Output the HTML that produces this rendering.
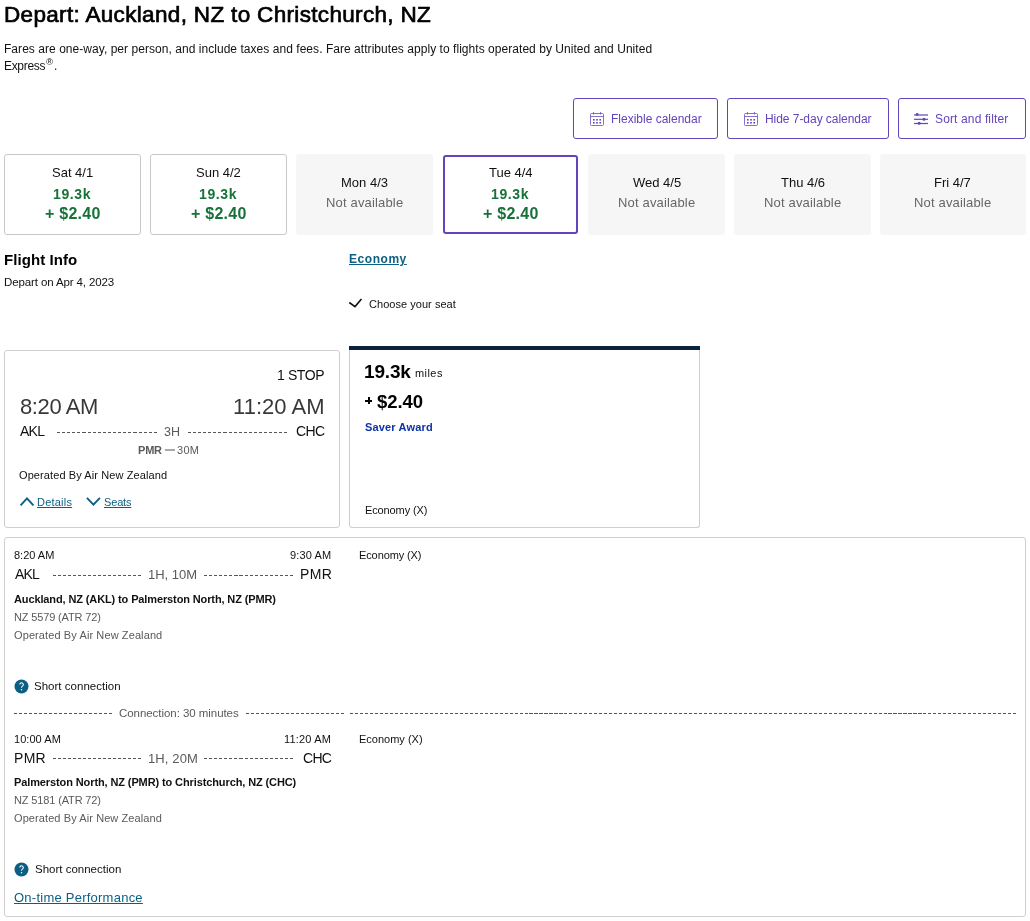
<!DOCTYPE html>
<html><head><meta charset="utf-8"><style>
html,body{margin:0;padding:0;background:#fff;}
body{width:1030px;height:921px;position:relative;overflow:hidden;font-family:"Liberation Sans",sans-serif;}
.t{position:absolute;white-space:nowrap;will-change:transform;}
.dash{position:absolute;height:1px;}
.btn{position:absolute;top:98px;height:41px;box-sizing:border-box;border:1px solid #6244bb;border-radius:3px;background:#fff;}
.ic{position:absolute;}
.card{position:absolute;top:154px;height:81px;box-sizing:border-box;border-radius:3px;}
.card.av{border:1px solid #c8c8c8;background:#fff;}
.card.na{background:#f6f6f6;}
.card.sel{border:2px solid #6244bb;background:#fff;top:155px;height:79px;}
.box{position:absolute;box-sizing:border-box;border:1px solid #cfcfcf;border-radius:3px;background:#fff;}
.box.fare{border-top:none;border-radius:0 0 3px 3px;}
.bar{position:absolute;left:349px;top:346px;width:351px;height:4px;background:#0c2340;}
</style></head><body>
<div class="btn" style="left:573px;width:145px;"></div>
<div class="btn" style="left:727px;width:161.5px;"></div>
<div class="btn" style="left:898px;width:128px;"></div>
<svg class="ic" style="left:589px;top:111px" width="16" height="16" viewBox="0 0 16 16"><g fill="none" stroke="#6244bb" stroke-width="0.9" opacity="0.85"><rect x="1.5" y="2.5" width="13" height="12" rx="1"/><line x1="1.5" y1="5.5" x2="14.5" y2="5.5"/><line x1="4.5" y1="1" x2="4.5" y2="3.5"/><line x1="11.5" y1="1" x2="11.5" y2="3.5"/></g><g fill="#6244bb"><rect x="4" y="8" width="1.6" height="1.6"/><rect x="7.2" y="8" width="1.6" height="1.6"/><rect x="10.4" y="8" width="1.6" height="1.6"/><rect x="4" y="11" width="1.6" height="1.6"/><rect x="7.2" y="11" width="1.6" height="1.6"/><rect x="10.4" y="11" width="1.6" height="1.6"/></g></svg>
<svg class="ic" style="left:743px;top:111px" width="16" height="16" viewBox="0 0 16 16"><g fill="none" stroke="#6244bb" stroke-width="0.9" opacity="0.85"><rect x="1.5" y="2.5" width="13" height="12" rx="1"/><line x1="1.5" y1="5.5" x2="14.5" y2="5.5"/><line x1="4.5" y1="1" x2="4.5" y2="3.5"/><line x1="11.5" y1="1" x2="11.5" y2="3.5"/></g><g fill="#6244bb"><rect x="4" y="8" width="1.6" height="1.6"/><rect x="7.2" y="8" width="1.6" height="1.6"/><rect x="10.4" y="8" width="1.6" height="1.6"/><rect x="4" y="11" width="1.6" height="1.6"/><rect x="7.2" y="11" width="1.6" height="1.6"/><rect x="10.4" y="11" width="1.6" height="1.6"/></g></svg>
<svg class="ic" style="left:912px;top:111px" width="18" height="16" viewBox="0 0 18 16"><g stroke="#6244bb" stroke-width="1.2" fill="none"><line x1="2" y1="4" x2="16" y2="4"/><line x1="2" y1="8.3" x2="16" y2="8.3"/><line x1="2" y1="12.5" x2="16" y2="12.5"/></g><g fill="#6244bb"><circle cx="5.2" cy="3.4" r="1.4"/><circle cx="12" cy="8.3" r="1.5"/><circle cx="7.2" cy="12.2" r="1.5"/></g></svg>
<div class="card av" style="left:4px;width:137px;"></div>
<div class="card av" style="left:150px;width:137px;"></div>
<div class="card na" style="left:296px;width:137px;"></div>
<div class="card sel" style="left:443px;width:135px;"></div>
<div class="card na" style="left:588px;width:137px;"></div>
<div class="card na" style="left:734px;width:137px;"></div>
<div class="card na" style="left:880px;width:146px;"></div>
<svg class="ic" style="left:347px;top:296px" width="17" height="14" viewBox="0 0 17 14"><polyline points="2.3,6.5 8,10.6 14.5,2.9" fill="none" stroke="#111" stroke-width="1.6"/></svg>
<div class="box" style="left:4px;top:350px;width:336px;height:178px;"></div>
<div class="dash" style="left:57px;top:432px;width:100.40px;background:repeating-linear-gradient(to right,#555 0 3.1px,transparent 3.1px 5.095px);"></div>
<div class="dash" style="left:187.8px;top:432px;width:99.80px;background:repeating-linear-gradient(to right,#555 0 3.1px,transparent 3.1px 5.063px);"></div>
<div style="position:absolute;left:165px;top:449px;width:9.5px;height:2px;background:#aaa;"></div>
<div style="position:absolute;left:365.1px;top:399.9px;z-index:2;width:7.3px;height:1.7px;background:#000;"></div><div style="position:absolute;left:367.9px;top:397.1px;z-index:2;width:1.7px;height:6.9px;background:#000;"></div>
<svg class="ic" style="left:18px;top:494px" width="18" height="14" viewBox="0 0 18 14"><polyline points="2.6,11.3 9,4.4 15.4,11.3" fill="none" stroke="#0b5f83" stroke-width="1.9"/></svg>
<svg class="ic" style="left:84px;top:494px" width="18" height="14" viewBox="0 0 18 14"><polyline points="2.9,3.8 9.4,10.6 15.9,3.8" fill="none" stroke="#0b5f83" stroke-width="1.9"/></svg>
<div class="box fare" style="left:349px;top:350px;width:351px;height:178px;"></div><div class="bar"></div>
<div class="box" style="left:4px;top:537px;width:1022px;height:380px;"></div>
<div class="dash" style="left:53px;top:575px;width:88.70px;background:repeating-linear-gradient(to right,#555 0 3.1px,transparent 3.1px 5.006px);"></div>
<div class="dash" style="left:203.8px;top:575px;width:89.80px;background:repeating-linear-gradient(to right,#555 0 3.1px,transparent 3.1px 5.071px);"></div>
<div class="dash" style="left:53.4px;top:758px;width:88.10px;background:repeating-linear-gradient(to right,#555 0 3.1px,transparent 3.1px 4.971px);"></div>
<div class="dash" style="left:204px;top:758px;width:89.70px;background:repeating-linear-gradient(to right,#555 0 3.1px,transparent 3.1px 5.065px);"></div>
<div class="dash" style="left:14px;top:713px;width:98.60px;background:repeating-linear-gradient(to right,#555 0 3.1px,transparent 3.1px 5.000px);"></div>
<div class="dash" style="left:246px;top:713px;width:98.40px;background:repeating-linear-gradient(to right,#555 0 3.1px,transparent 3.1px 4.989px);"></div>
<div class="dash" style="left:350px;top:713px;width:666.80px;background:repeating-linear-gradient(to right,#555 0 3.1px,transparent 3.1px 4.986px);"></div>
<svg class="ic" style="left:14px;top:678.9px" width="15" height="15" viewBox="0 0 15 15"><circle cx="7.5" cy="7.5" r="7" fill="#0b5f83"/><path d="M5.8,5.5 A1.75,1.75 0 1 1 8.4,7.1 C7.8,7.5 7.5,7.9 7.5,8.8" fill="none" stroke="#fff" stroke-width="1.05"/><circle cx="7.5" cy="10.7" r="0.75" fill="#fff"/></svg>
<svg class="ic" style="left:14px;top:861.9px" width="15" height="15" viewBox="0 0 15 15"><circle cx="7.5" cy="7.5" r="7" fill="#0b5f83"/><path d="M5.8,5.5 A1.75,1.75 0 1 1 8.4,7.1 C7.8,7.5 7.5,7.9 7.5,8.8" fill="none" stroke="#fff" stroke-width="1.05"/><circle cx="7.5" cy="10.7" r="0.75" fill="#fff"/></svg>
<div class="t" style="left:4.05px;top:4.00px;font-size:22.5px;line-height:22.5px;font-weight:400;color:#000;letter-spacing:0.331px;-webkit-text-stroke:0.7px #000;">Depart: Auckland, NZ to Christchurch, NZ</div>
<div class="t" style="left:3.92px;top:43.00px;font-size:12px;line-height:12px;font-weight:400;color:#111111;letter-spacing:0.044px;">Fares are one-way, per person, and include taxes and fees. Fare attributes apply to flights operated by United and United</div>
<div class="t" style="left:3.92px;top:60.00px;font-size:12px;line-height:12px;font-weight:400;color:#111111;letter-spacing:-0.322px;">Express</div>
<div class="t" style="left:45.86px;top:57.00px;font-size:9.5px;line-height:9.5px;font-weight:400;color:#111111;">®</div>
<div class="t" style="left:53.70px;top:60.00px;font-size:12px;line-height:12px;font-weight:400;color:#111111;">.</div>
<div class="t" style="left:610.62px;top:113.00px;font-size:12px;line-height:12px;font-weight:400;color:#6244bb;">Flexible calendar</div>
<div class="t" style="left:764.82px;top:113.00px;font-size:12px;line-height:12px;font-weight:400;color:#6244bb;letter-spacing:-0.045px;">Hide 7-day calendar</div>
<div class="t" style="left:935.36px;top:113.00px;font-size:12px;line-height:12px;font-weight:400;color:#6244bb;letter-spacing:0.134px;">Sort and filter</div>
<div class="t" style="left:51.92px;top:166.00px;font-size:13px;line-height:13px;font-weight:400;color:#111111;">Sat 4/1</div>
<div class="t" style="left:53.27px;top:187.00px;font-size:14px;line-height:14px;font-weight:700;color:#17723a;letter-spacing:0.633px;">19.3k</div>
<div class="t" style="left:44.83px;top:206.00px;font-size:16px;line-height:16px;font-weight:700;color:#17723a;letter-spacing:0.250px;">+ $2.40</div>
<div class="t" style="left:196.12px;top:166.00px;font-size:13px;line-height:13px;font-weight:400;color:#111111;">Sun 4/2</div>
<div class="t" style="left:199.27px;top:187.00px;font-size:14px;line-height:14px;font-weight:700;color:#17723a;letter-spacing:0.633px;">19.3k</div>
<div class="t" style="left:190.83px;top:206.00px;font-size:16px;line-height:16px;font-weight:700;color:#17723a;letter-spacing:0.250px;">+ $2.40</div>
<div class="t" style="left:340.77px;top:176.00px;font-size:13px;line-height:13px;font-weight:400;color:#111111;">Mon 4/3</div>
<div class="t" style="left:325.68px;top:196.00px;font-size:13px;line-height:13px;font-weight:400;color:#666;letter-spacing:0.166px;">Not available</div>
<div class="t" style="left:488.74px;top:166.00px;font-size:13px;line-height:13px;font-weight:400;color:#111111;">Tue 4/4</div>
<div class="t" style="left:491.27px;top:187.00px;font-size:14px;line-height:14px;font-weight:700;color:#17723a;letter-spacing:0.633px;">19.3k</div>
<div class="t" style="left:482.83px;top:206.00px;font-size:16px;line-height:16px;font-weight:700;color:#17723a;letter-spacing:0.250px;">+ $2.40</div>
<div class="t" style="left:632.66px;top:176.00px;font-size:13px;line-height:13px;font-weight:400;color:#111111;">Wed 4/5</div>
<div class="t" style="left:617.68px;top:196.00px;font-size:13px;line-height:13px;font-weight:400;color:#666;letter-spacing:0.166px;">Not available</div>
<div class="t" style="left:780.60px;top:176.00px;font-size:13px;line-height:13px;font-weight:400;color:#111111;">Thu 4/6</div>
<div class="t" style="left:763.68px;top:196.00px;font-size:13px;line-height:13px;font-weight:400;color:#666;letter-spacing:0.166px;">Not available</div>
<div class="t" style="left:934.37px;top:176.00px;font-size:13px;line-height:13px;font-weight:400;color:#111111;">Fri 4/7</div>
<div class="t" style="left:914.18px;top:196.00px;font-size:13px;line-height:13px;font-weight:400;color:#666;letter-spacing:0.166px;">Not available</div>
<div class="t" style="left:3.80px;top:252.00px;font-size:15px;line-height:15px;font-weight:700;color:#000;letter-spacing:0.072px;">Flight Info</div>
<div class="t" style="left:3.86px;top:277.00px;font-size:11.5px;line-height:11.5px;font-weight:400;color:#111111;letter-spacing:-0.115px;">Depart on Apr 4, 2023</div>
<div class="t" style="left:348.70px;top:253.00px;font-size:12px;line-height:12px;font-weight:700;color:#0b5f83;letter-spacing:0.543px;text-decoration:underline;text-underline-offset:1px;">Economy</div>
<div class="t" style="left:369.14px;top:299.00px;font-size:11px;line-height:11px;font-weight:400;color:#111111;letter-spacing:0.041px;">Choose your seat</div>
<div class="t" style="left:277.43px;top:368.00px;font-size:14px;line-height:14px;font-weight:400;color:#111111;letter-spacing:-0.387px;">1 STOP</div>
<div class="t" style="left:19.64px;top:396.00px;font-size:22px;line-height:22px;font-weight:400;color:#383838;letter-spacing:-0.378px;">8:20 AM</div>
<div class="t" style="left:232.82px;top:396.00px;font-size:22px;line-height:22px;font-weight:400;color:#383838;letter-spacing:0.035px;">11:20 AM</div>
<div class="t" style="left:20.07px;top:424.00px;font-size:14px;line-height:14px;font-weight:400;color:#111111;letter-spacing:-0.735px;">AKL</div>
<div class="t" style="left:163.52px;top:426.00px;font-size:12.5px;line-height:12.5px;font-weight:400;color:#5a5a5a;">3H</div>
<div class="t" style="left:295.79px;top:424.00px;font-size:14px;line-height:14px;font-weight:400;color:#111111;letter-spacing:-0.643px;">CHC</div>
<div class="t" style="left:138.06px;top:445.00px;font-size:11px;line-height:11px;font-weight:700;color:#5a5a5a;letter-spacing:-0.191px;">PMR</div>
<div class="t" style="left:176.78px;top:445.00px;font-size:11px;line-height:11px;font-weight:400;color:#5a5a5a;letter-spacing:0.311px;">30M</div>
<div class="t" style="left:19.48px;top:470.00px;font-size:11px;line-height:11px;font-weight:400;color:#111111;letter-spacing:0.096px;">Operated By Air New Zealand</div>
<div class="t" style="left:37.20px;top:497.00px;font-size:11px;line-height:11px;font-weight:400;color:#0b5f83;letter-spacing:0.213px;text-decoration:underline;text-underline-offset:1px;">Details</div>
<div class="t" style="left:104.00px;top:497.00px;font-size:11px;line-height:11px;font-weight:400;color:#0b5f83;letter-spacing:-0.158px;text-decoration:underline;text-underline-offset:1px;">Seats</div>
<div class="t" style="left:364.40px;top:362.00px;font-size:19px;line-height:19px;font-weight:700;color:#000;letter-spacing:-0.167px;">19.3k</div>
<div class="t" style="left:414.97px;top:368.00px;font-size:11px;line-height:11px;font-weight:400;color:#111111;letter-spacing:0.440px;">miles</div>
<div class="t" style="left:376.76px;top:393.00px;font-size:18.5px;line-height:18.5px;font-weight:700;color:#000;letter-spacing:-0.048px;">$2.40</div>
<div class="t" style="left:364.68px;top:422.00px;font-size:11px;line-height:11px;font-weight:700;color:#0d33a6;letter-spacing:0.160px;">Saver Award</div>
<div class="t" style="left:364.50px;top:505.00px;font-size:11px;line-height:11px;font-weight:400;color:#111111;letter-spacing:-0.119px;">Economy (X)</div>
<div class="t" style="left:14.12px;top:550.00px;font-size:11px;line-height:11px;font-weight:400;color:#111111;">8:20 AM</div>
<div class="t" style="left:290.48px;top:550.00px;font-size:11px;line-height:11px;font-weight:400;color:#111111;letter-spacing:0.142px;">9:30 AM</div>
<div class="t" style="left:359.00px;top:550.00px;font-size:11px;line-height:11px;font-weight:400;color:#111111;letter-spacing:-0.109px;">Economy (X)</div>
<div class="t" style="left:14.57px;top:567.00px;font-size:14px;line-height:14px;font-weight:400;color:#111111;letter-spacing:-0.785px;">AKL</div>
<div class="t" style="left:148.41px;top:568.00px;font-size:13px;line-height:13px;font-weight:400;color:#5a5a5a;letter-spacing:-0.029px;">1H, 10M</div>
<div class="t" style="left:300.15px;top:567.00px;font-size:14px;line-height:14px;font-weight:400;color:#111111;letter-spacing:0.394px;">PMR</div>
<div class="t" style="left:14.33px;top:594.00px;font-size:11px;line-height:11px;font-weight:700;color:#111111;letter-spacing:-0.120px;">Auckland, NZ (AKL) to Palmerston North, NZ (PMR)</div>
<div class="t" style="left:13.70px;top:612.00px;font-size:11px;line-height:11px;font-weight:400;color:#5a5a5a;letter-spacing:-0.144px;">NZ 5579 (ATR 72)</div>
<div class="t" style="left:14.08px;top:630.00px;font-size:11px;line-height:11px;font-weight:400;color:#5a5a5a;letter-spacing:0.104px;">Operated By Air New Zealand</div>
<div class="t" style="left:34.48px;top:681.00px;font-size:11.5px;line-height:11.5px;font-weight:400;color:#111111;letter-spacing:0.018px;">Short connection</div>
<div class="t" style="left:119.12px;top:708.00px;font-size:11.5px;line-height:11.5px;font-weight:400;color:#5a5a5a;letter-spacing:-0.053px;">Connection: 30 minutes</div>
<div class="t" style="left:14.16px;top:734.00px;font-size:11px;line-height:11px;font-weight:400;color:#111111;letter-spacing:0.051px;">10:00 AM</div>
<div class="t" style="left:284.46px;top:734.00px;font-size:11px;line-height:11px;font-weight:400;color:#111111;letter-spacing:0.168px;">11:20 AM</div>
<div class="t" style="left:358.80px;top:734.00px;font-size:11px;line-height:11px;font-weight:400;color:#111111;">Economy (X)</div>
<div class="t" style="left:13.85px;top:751.00px;font-size:14px;line-height:14px;font-weight:400;color:#111111;letter-spacing:0.294px;">PMR</div>
<div class="t" style="left:147.71px;top:752.00px;font-size:13px;line-height:13px;font-weight:400;color:#5a5a5a;letter-spacing:0.121px;">1H, 20M</div>
<div class="t" style="left:302.59px;top:751.00px;font-size:14px;line-height:14px;font-weight:400;color:#111111;letter-spacing:-0.693px;">CHC</div>
<div class="t" style="left:14.26px;top:777.00px;font-size:11px;line-height:11px;font-weight:700;color:#111111;letter-spacing:-0.109px;">Palmerston North, NZ (PMR) to Christchurch, NZ (CHC)</div>
<div class="t" style="left:14.10px;top:795.00px;font-size:11px;line-height:11px;font-weight:400;color:#5a5a5a;letter-spacing:-0.138px;">NZ 5181 (ATR 72)</div>
<div class="t" style="left:14.48px;top:813.00px;font-size:11px;line-height:11px;font-weight:400;color:#5a5a5a;letter-spacing:0.089px;">Operated By Air New Zealand</div>
<div class="t" style="left:34.88px;top:864.00px;font-size:11.5px;line-height:11.5px;font-weight:400;color:#111111;">Short connection</div>
<div class="t" style="left:13.68px;top:891.00px;font-size:13px;line-height:13px;font-weight:400;color:#0b5f83;letter-spacing:0.241px;text-decoration:underline;text-underline-offset:1px;">On-time Performance</div>
</body></html>
